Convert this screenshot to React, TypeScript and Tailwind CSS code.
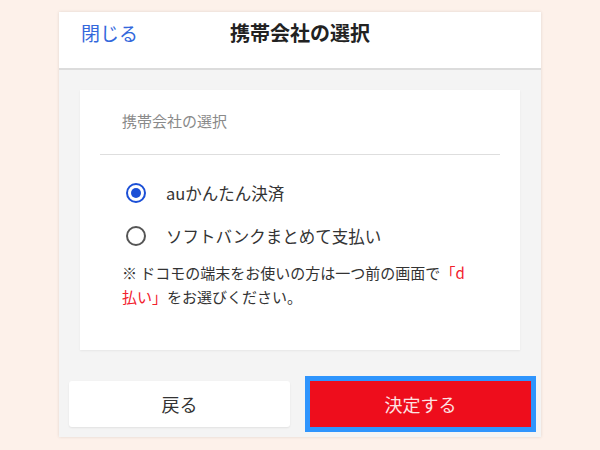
import { useState } from 'react';

const font = { fontFamily: '"Noto Sans CJK JP", "Noto Sans", sans-serif' };

interface CarrierOption {
  id: string;
  label: string;
}

const options: CarrierOption[] = [
  { id: 'au', label: 'auかんたん決済' },
  { id: 'softbank', label: 'ソフトバンクまとめて支払い' },
];

function Radio({ checked }: { checked: boolean }) {
  return (
    <span
      className={
        checked
          ? 'w-[20px] h-[20px] rounded-full border-[2.5px] border-[#1b4fd6] flex items-center justify-center flex-shrink-0'
          : 'w-[20px] h-[20px] rounded-full border-[2.5px] border-[#555555] flex items-center justify-center flex-shrink-0'
      }
    >
      {checked && <span className="w-[10px] h-[10px] rounded-full bg-[#1b4fd6]" />}
    </span>
  );
}

export default function App() {
  const [selected, setSelected] = useState('au');

  return (
    <div className="w-full h-[450px] bg-[#fdf1ea] flex justify-center pt-[12px]" style={font}>
      <div className="w-[482px] h-[425px] bg-[#f4f4f4] flex flex-col shadow-[0_0_3px_rgba(0,0,0,0.12)]">
        {/* Header */}
        <div className="h-[58px] bg-white border-b-2 border-[#dcdcdc] relative flex justify-center pt-[7px] flex-shrink-0">
          <button className="absolute left-[22px] top-[7px] text-[19px] leading-[28px] text-[#3368dc]">
            閉じる
          </button>
          <h1 className="text-[20px] leading-[28px] font-bold text-[#222222]">携帯会社の選択</h1>
        </div>

        {/* Card */}
        <div className="px-[21px] pt-[20px]">
          <div className="w-[440px] h-[260px] bg-white shadow-[0_1px_2px_rgba(0,0,0,0.06)] flex flex-col">
            <p className="pl-[42px] pt-[20px] text-[15px] leading-[22px] text-[#8a8a8a]">携帯会社の選択</p>
            <div className="mx-[20px] mt-[22px] border-t border-[#dedede]" />

            <div className="flex flex-col gap-[23px] pt-[28px] pl-[46px]">
              {options.map(o => (
                <label
                  key={o.id}
                  onClick={() => setSelected(o.id)}
                  className="flex items-center gap-[20px] h-[20px] cursor-pointer"
                >
                  <Radio checked={selected === o.id} />
                  <span className="text-[16.5px] leading-[24px] text-[#333333]">{o.label}</span>
                </label>
              ))}
            </div>

            <p className="pl-[42px] pt-[15px] text-[15px] leading-[24px] text-[#333333]">
              ※ ドコモの端末をお使いの方は一つ前の画面で<span className="text-[#f2202c]">「d</span>
              <br />
              <span className="text-[#f2202c]">払い」</span>をお選びください。
            </p>
          </div>
        </div>

        {/* Buttons */}
        <div className="flex gap-[20px] px-[10px] pt-[31px]">
          <button className="w-[221px] h-[46px] bg-white rounded-[3px] shadow-[0_1px_2px_rgba(0,0,0,0.08)] text-[18px] text-[#333333]">
            戻る
          </button>
          <button className="w-[221px] h-[46px] bg-[#ee0d1c] outline outline-[5px] outline-[#2f95fd] text-[18px] text-[#fde2e2]">
            決定する
          </button>
        </div>
      </div>
    </div>
  );
}
